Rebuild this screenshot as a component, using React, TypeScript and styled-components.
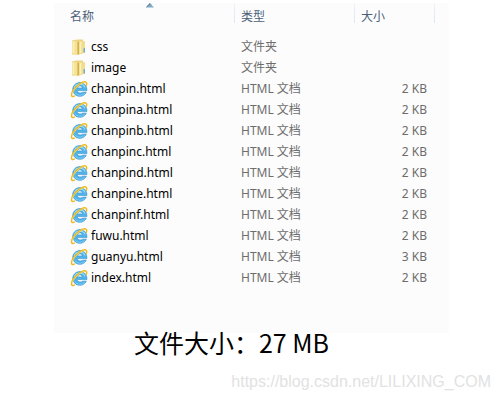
import React from "react";
import styled, { createGlobalStyle } from "styled-components";

const GlobalStyle = createGlobalStyle`
  * { box-sizing: border-box; }
  body {
    margin: 0;
    background: #ffffff;
    font-family: "Noto Sans", "Noto Sans CJK SC", sans-serif;
    font-size: 12px;
  }
`;

const Page = styled.main`
  display: flex;
  flex-direction: column;
  padding-top: 3px;
`;

const Panel = styled.section`
  margin: 0 51px 0 54px;
  padding: 0 14px 45px 10px;
  background: #fcfcfc;
`;

const FileTable = styled.table`
  width: 100%;
  table-layout: fixed;
  border-collapse: separate;
  border-spacing: 0;
`;

const HeaderCell = styled.th<{ $width?: number }>`
  position: relative;
  width: ${(p) => (p.$width ? `${p.$width}px` : "auto")};
  height: 33px;
  padding: 5px 6px 0;
  line-height: 18px;
  vertical-align: top;
  text-align: left;
  font-weight: 400;
  color: #4c607a;
  background: linear-gradient(#edf2f8, #dce7f2) right top / 1px 20px no-repeat;
`;

const SortMark = styled.svg`
  position: absolute;
  top: 0;
  left: 50%;
  width: 8px;
  height: 5px;
  margin-left: -4px;
`;

const Cell = styled.td<{ $align?: "left" | "right" }>`
  height: 21px;
  padding: 0 8px 0 6px;
  line-height: 21px;
  white-space: nowrap;
  text-align: ${(p) => p.$align ?? "left"};
  color: #6d6d6d;
`;

const FileName = styled.div`
  display: flex;
  align-items: center;
  gap: 3px;
  color: #000000;

  svg {
    flex: none;
    width: 18px;
    height: 18px;
  }
`;

const Caption = styled.p`
  margin: 0 37px 0 0;
  text-align: center;
  font-family: "Noto Sans CJK SC", sans-serif;
  font-size: 25px;
  line-height: 18px;
  color: #000000;
`;

const Watermark = styled.footer`
  padding: 22px 9px 0 0;
  text-align: right;
  font-family: "Liberation Sans", sans-serif;
  font-size: 16px;
  line-height: 18px;
  color: #e2e2e2;
`;

const FolderIcon = () => (
  <svg viewBox="0 0 18 18" aria-hidden="true">
    <path d="M2 2.500 7 1.500h6v2h2v11L9 16.500H2z" fill="#ecd47e" />
    <path d="M9 3h4.500l1.500 1v10.500l-6 2z" fill="#f2dd8f" />
    <path d="M2 2.500 7.500 3.500V17L2 15.500z" fill="#f5e297" />
    <path d="M3.500 3.500v11.500" stroke="#fbf0bd" strokeWidth="1.500" />
    <path d="M7.500 3.500V17l1.500-1V4z" fill="#d0b04c" />
    <path d="M10.500 4v11" stroke="#fbf1c2" strokeWidth="1.500" />
    <path d="M13.500 10H15v4.500h-1.500z" fill="#79adc6" />
  </svg>
);

const BrowserIcon = () => (
  <svg viewBox="0 0 18 18" aria-hidden="true">
    <path
      d="M16.300 12.200A7.100 6.900 0 1 1 16.900 9.500V10.600H7.200c.2 1.600 1.200 2.400 2.900 2.400 1.200 0 2.100-.3 2.700-.8zM7.200 7.900h5.300C12.200 6.500 11.300 5.900 9.900 5.900S7.500 6.500 7.200 7.900z"
      fill="#52b3ea"
      stroke="#308fcb"
      strokeWidth=".6"
    />
    <path d="M4.300 7.900C5.200 5.200 7.100 4 9.800 4c2.600 0 4.400 1.200 5.200 3.400" fill="none" stroke="#a1e0fb" strokeWidth="1.100" />
    <path d="M4.800 12.600C6 14.300 7.700 15.200 9.900 15.200c2 0 3.500-.6 4.700-1.800" fill="none" stroke="#83d0f5" strokeWidth=".9" />
    <path
      d="M4.300 16.100C2.700 16.800 1.600 16.500 1.500 15.300 1.300 12.700 4.100 8.500 7.800 5.400 11.200 2.500 14.800 1.100 16.100 2.200c.7.600.7 1.700.2 3"
      fill="none"
      stroke="#efb91d"
      strokeWidth="1.500"
      strokeLinecap="round"
    />
    <path d="M2.500 13.200C3.700 10.600 5.700 8 8.300 5.900c2.300-1.800 4.600-3.100 6.200-3.400" fill="none" stroke="#ffe05c" strokeWidth=".7" />
  </svg>
);

interface Entry {
  name: string;
  size?: string;
}

const entries: Entry[] = [
  { name: "css" },
  { name: "image" },
  { name: "chanpin.html", size: "2 KB" },
  { name: "chanpina.html", size: "2 KB" },
  { name: "chanpinb.html", size: "2 KB" },
  { name: "chanpinc.html", size: "2 KB" },
  { name: "chanpind.html", size: "2 KB" },
  { name: "chanpine.html", size: "2 KB" },
  { name: "chanpinf.html", size: "2 KB" },
  { name: "fuwu.html", size: "2 KB" },
  { name: "guanyu.html", size: "3 KB" },
  { name: "index.html", size: "2 KB" },
];

export default function App() {
  return (
    <>
      <GlobalStyle />
      <Page>
        <Panel>
          <FileTable>
            <thead>
              <tr>
                <HeaderCell scope="col" aria-sort="ascending">
                  名称
                  <SortMark viewBox="0 0 8 5" aria-hidden="true">
                    <path d="M0 4.500 4 .5l4 4z" fill="#7fa9c4" />
                    <path d="M.5 4 4 .6 5 1.600" fill="none" stroke="#426b87" strokeWidth="1" />
                  </SortMark>
                </HeaderCell>
                <HeaderCell scope="col" $width={120}>类型</HeaderCell>
                <HeaderCell scope="col" $width={80}>大小</HeaderCell>
              </tr>
            </thead>
            <tbody>
              {entries.map((entry) => (
                <tr key={entry.name}>
                  <Cell>
                    <FileName>
                      {entry.size ? <BrowserIcon /> : <FolderIcon />}
                      {entry.name}
                    </FileName>
                  </Cell>
                  <Cell>{entry.size ? "HTML 文档" : "文件夹"}</Cell>
                  <Cell $align="right">{entry.size}</Cell>
                </tr>
              ))}
            </tbody>
          </FileTable>
        </Panel>
        <Caption>文件大小：27 MB</Caption>
        <Watermark>https://blog.csdn.net/LILIXING_COM</Watermark>
      </Page>
    </>
  );
}
